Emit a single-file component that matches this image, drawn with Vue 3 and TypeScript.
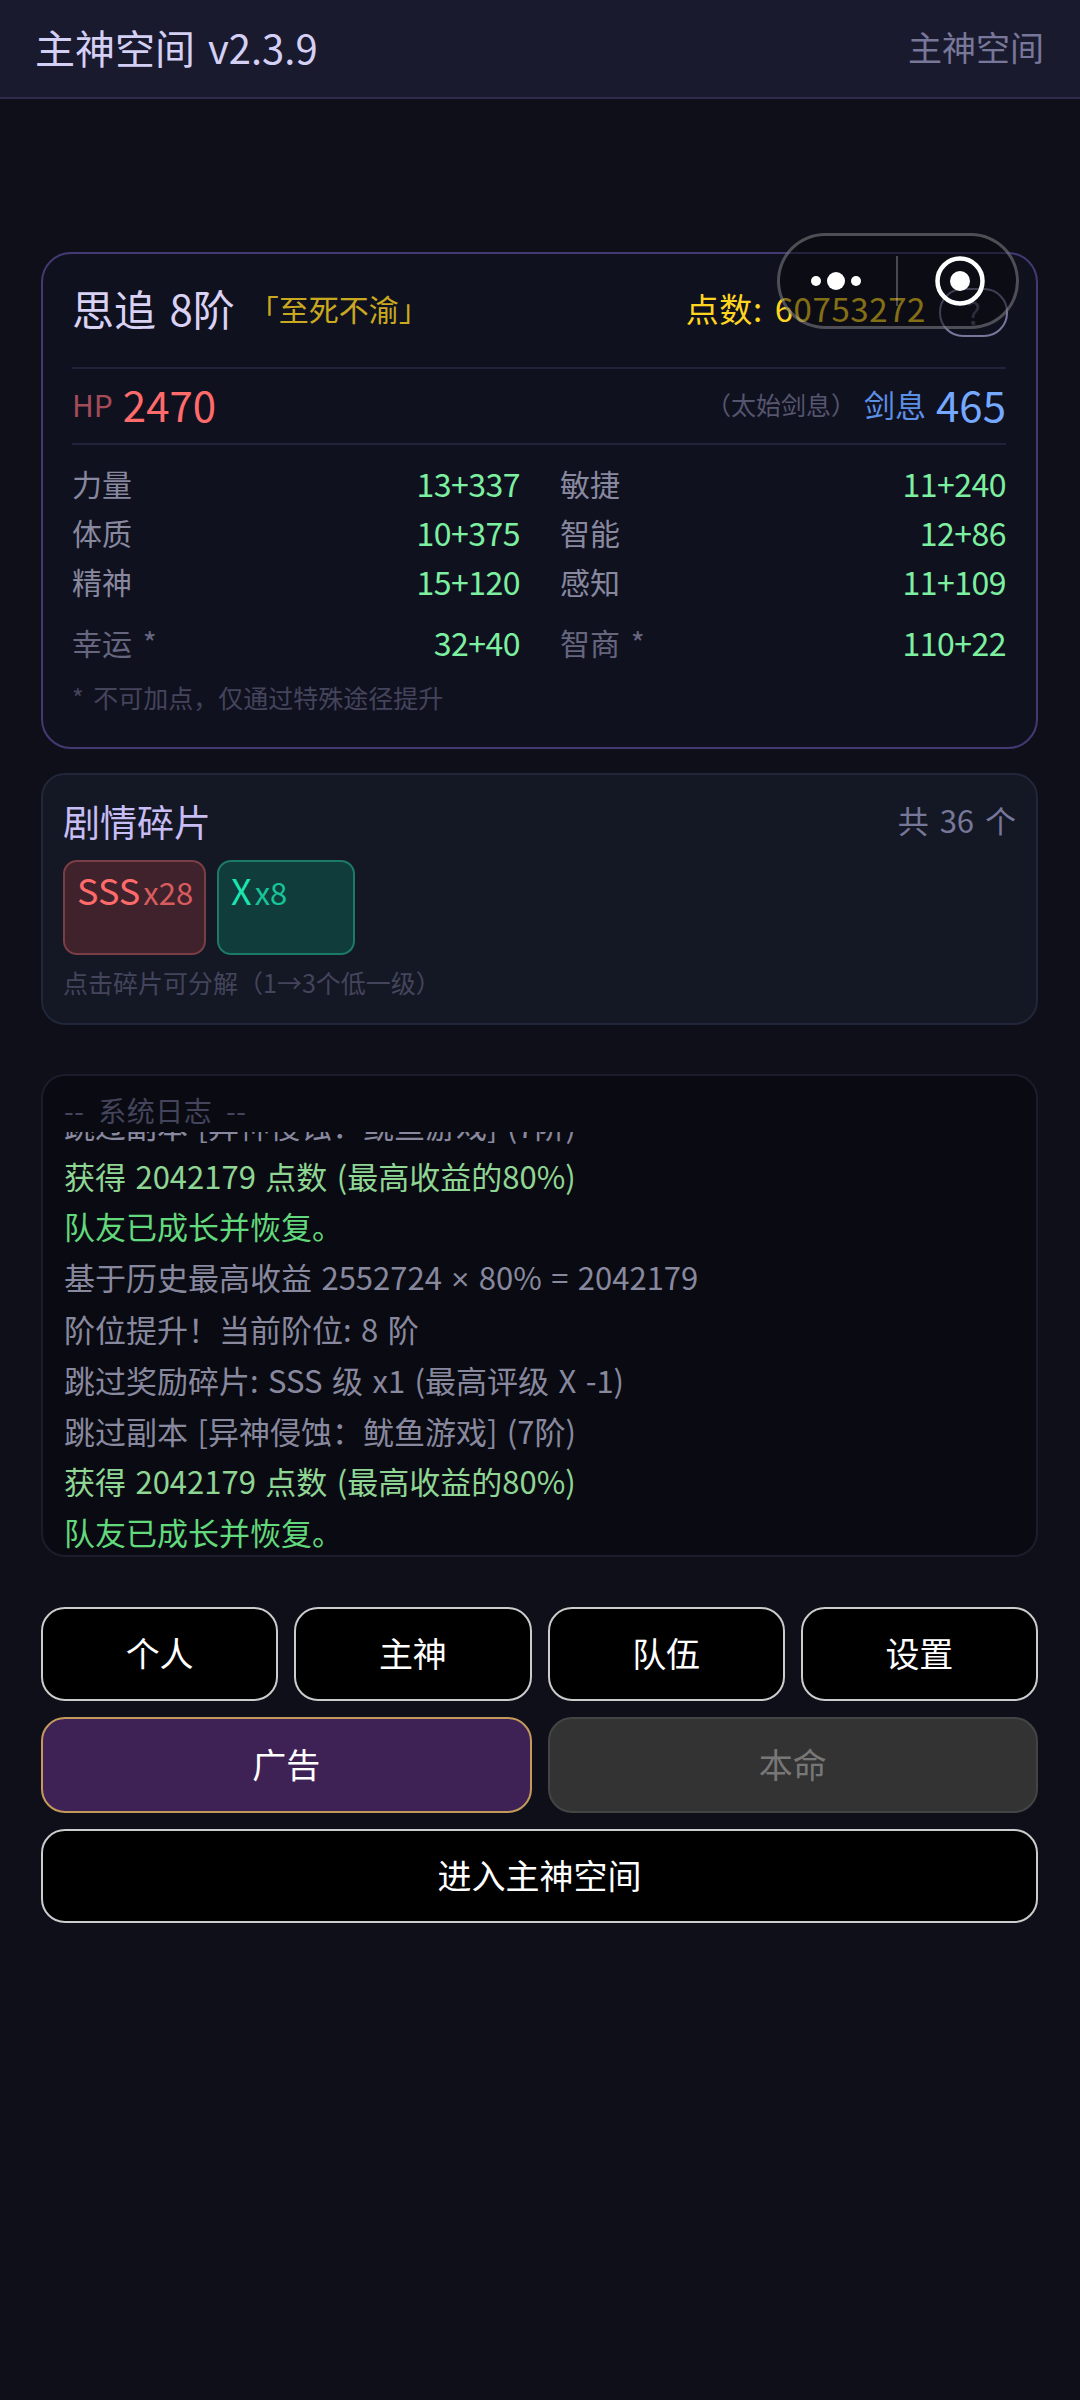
<template>
  <div class="page">
    <header class="topbar">
      <span class="app-title">主神空间 v2.3.9</span>
      <span class="app-sub">主神空间</span>
    </header>

    <main class="content">
      <section class="hero">
        <div class="hero-head">
          <span class="hero-name">思追 8阶</span>
          <span class="hero-title">「至死不渝」</span>
          <span class="points">点数: 60753272</span>
          <span class="help">?</span>
        </div>
        <div class="hero-hp">
          <span class="hp-label">HP</span>
          <span class="hp-value">2470</span>
          <span class="sword-note">（太始剑息）</span>
          <span class="sword-label">剑息</span>
          <span class="sword-value">465</span>
        </div>
        <div class="stats">
          <div v-for="s in stats" :key="s.name" class="stat">
            <span class="stat-name">{{ s.name }}</span>
            <span class="stat-value">{{ s.value }}</span>
          </div>
        </div>
        <div class="stats stats-special">
          <div v-for="s in specialStats" :key="s.name" class="stat">
            <span class="stat-name dim">{{ s.name }}</span>
            <span class="stat-value">{{ s.value }}</span>
          </div>
        </div>
        <p class="hero-note">* 不可加点，仅通过特殊途径提升</p>
      </section>

      <section class="shards">
        <div class="shards-head">
          <span class="shards-title">剧情碎片</span>
          <span class="shards-count">共 36 个</span>
        </div>
        <div class="chips">
          <div class="chip chip-sss"><span class="chip-grade">SSS</span><span class="chip-num">x28</span></div>
          <div class="chip chip-x"><span class="chip-grade">X</span><span class="chip-num">x8</span></div>
        </div>
        <p class="shards-note">点击碎片可分解（1→3个低一级）</p>
      </section>

      <section class="log">
        <div class="log-title">-- 系统日志 --</div>
        <div class="log-body">
          <div v-for="(l, i) in logs" :key="i" class="log-line" :class="l.kind">
            <template v-for="(part, j) in l.text.split('×')" :key="j">
              <span v-if="j" class="times">×</span>{{ part }}
            </template>
          </div>
        </div>
      </section>

      <nav class="actions">
        <div class="row four">
          <button v-for="b in mainButtons" :key="b" class="btn">{{ b }}</button>
        </div>
        <div class="row two">
          <button class="btn btn-ad">广告</button>
          <button class="btn btn-off">本命</button>
        </div>
        <button class="btn">进入主神空间</button>
      </nav>
    </main>

    <div class="capsule">
      <div class="capsule-part">
        <svg width="60" height="24" viewBox="0 0 60 24">
          <circle cx="10" cy="12" r="5" fill="#fff" />
          <circle cx="30" cy="12" r="9" fill="#fff" />
          <circle cx="50" cy="12" r="5" fill="#fff" />
        </svg>
      </div>
      <div class="capsule-part">
        <svg width="52" height="52" viewBox="0 0 52 52">
          <circle cx="26" cy="26" r="22.5" fill="none" stroke="#fff" stroke-width="4.5" />
          <circle cx="26" cy="26" r="10" fill="#fff" />
        </svg>
      </div>
    </div>
  </div>
</template>

<script setup lang="ts">
const stats = [
  { name: '力量', value: '13+337' },
  { name: '敏捷', value: '11+240' },
  { name: '体质', value: '10+375' },
  { name: '智能', value: '12+86' },
  { name: '精神', value: '15+120' },
  { name: '感知', value: '11+109' },
]

const specialStats = [
  { name: '幸运 *', value: '32+40' },
  { name: '智商 *', value: '110+22' },
]

const logs = [
  { text: '跳过副本 [异神侵蚀：鱿鱼游戏] (7阶)', kind: '' },
  { text: '获得 2042179 点数 (最高收益的80%)', kind: 'gain' },
  { text: '队友已成长并恢复。', kind: 'ok' },
  { text: '基于历史最高收益 2552724 × 80% = 2042179', kind: '' },
  { text: '阶位提升！当前阶位: 8 阶', kind: '' },
  { text: '跳过奖励碎片: SSS 级 x1 (最高评级 X -1)', kind: '' },
  { text: '跳过副本 [异神侵蚀：鱿鱼游戏] (7阶)', kind: '' },
  { text: '获得 2042179 点数 (最高收益的80%)', kind: 'gain' },
  { text: '队友已成长并恢复。', kind: 'ok' },
]

const mainButtons = ['个人', '主神', '队伍', '设置']
</script>

<style>
html, body { background: #0f0f1a; }
</style>

<style scoped>
.page {
  position: relative;
  min-height: 2400px;
  background: #0f0f1a;
  font-family: "Noto Sans CJK SC", sans-serif;
  word-spacing: 4px;
  color: #ccc;
}
.topbar {
  height: 99px;
  box-sizing: border-box;
  padding: 0 36px 4px 35px;
  display: flex; align-items: center; justify-content: space-between;
  background: #1a1a2e;
  border-bottom: 2px solid #2d2d4a;
}
.app-title { font-size: 40px; color: #d4d0f5; }
.app-sub { font-size: 34px; color: #77779a; }

.content { padding: 153px 42px 0 41px; }

.hero {
  box-sizing: border-box;
  height: 497px;
  padding: 0 30px 0 29px;
  background: #10111f;
  border: 2px solid #433a74;
  border-radius: 30px;
}
.hero-head {
  box-sizing: border-box;
  height: 115px;
  padding-bottom: 6px;
  display: flex; align-items: center;
  border-bottom: 2px solid #22223a;
}
.hero-name { font-size: 42px; color: #d9d2f5; }
.hero-title { font-size: 30px; color: #c9a920; margin-left: 14px; }
.points { margin-left: auto; font-size: 33px; letter-spacing: .6px; color: #ffd61f; }
.help {
  width: 69px; height: 49px;
  box-sizing: border-box;
  margin: 9px -2px 0 13px;
  border: 2px solid #77779a;
  border-radius: 24px;
  display: flex; align-items: center; justify-content: center;
  font-size: 30px;
  color: #55556f;
}
.hero-hp {
  box-sizing: border-box;
  height: 76px;
  padding-bottom: 5px;
  display: flex; align-items: center;
  border-bottom: 2px solid #22223a;
}
.hp-label { font-size: 30px; color: #a34b57; }
.hp-value { font-size: 42px; color: #ff6b6b; margin-left: 10px; }
.sword-note { margin-left: auto; font-size: 25px; color: #55556f; }
.sword-label { font-size: 31px; color: #5c8fe6; margin-left: 8px; }
.sword-value { font-size: 42px; color: #74a9ff; margin-left: 10px; }

.stats {
  display: grid;
  grid-template-columns: 448px 1fr;
  column-gap: 40px;
  padding-top: 13px;
}
.stats-special { padding-top: 12px; }
.stat {
  height: 49px;
  display: flex; align-items: center; justify-content: space-between;
}
.stat-name { font-size: 30px; color: #88889f; }
.stat-name.dim { color: #66667f; }
.stat-value { font-size: 32px; letter-spacing: -0.5px; color: #7cf0a0; }
.hero-note { margin: 13px 0 0; font-size: 25px; color: #44445c; }

.shards {
  box-sizing: border-box;
  height: 252px;
  margin-top: 24px;
  padding: 16px 20px 0;
  background: #141824;
  border: 2px solid #22263a;
  border-radius: 24px;
}
.shards-head { display: flex; align-items: center; justify-content: space-between; height: 60px; }
.shards-title { font-size: 37px; color: #c8bdf5; }
.shards-count { font-size: 31px; color: #77779a; position: relative; top: -2px; }
.chips { display: flex; gap: 11px; margin-top: 9px; }
.chip {
  box-sizing: border-box;
  height: 95px;
  padding: 1px 12px;
  border: 2px solid;
  border-radius: 14px;
  display: flex; align-items: baseline; gap: 3px;
}
.chip-sss { width: 143px; background: #40222c; border-color: #7a3e46; color: #ff6b6b; }
.chip-x { width: 138px; background: #103c3c; border-color: #1c7a68; color: #19e6b0; }
.chip-grade { font-size: 36px; }
.chip-num { font-size: 31px; opacity: .8; }
.shards-note { margin: 9px 0 0; font-size: 25px; color: #44445c; }

.log {
  box-sizing: border-box;
  height: 483px;
  margin-top: 49px;
  padding: 16px 21px 0;
  background: #0a0b12;
  border: 2px solid #1c1d2c;
  border-radius: 24px;
  display: flex; flex-direction: column;
  overflow: hidden;
}
.log-title { flex: none; font-size: 28px; line-height: 36px; word-spacing: 7px; letter-spacing: .5px; color: #44445c; margin-bottom: 4px; }
.log-body {
  flex: 1;
  min-height: 0;
  overflow: hidden;
  display: flex; flex-direction: column; justify-content: flex-end;
  margin-bottom: -3px;
}
.log-line { flex: none; font-size: 31px; line-height: 50.8px; white-space: nowrap; word-spacing: 2.5px; color: #88889f; }
.log-line.gain { color: #8fd694; }
.log-line.ok { color: #62d97c; }
.times { font-family: Lato, sans-serif; }

.actions { margin-top: 50px; display: flex; flex-direction: column; gap: 16px; }
.row { display: grid; gap: 16px; }
.four { grid-template-columns: repeat(4, 1fr); }
.two { grid-template-columns: repeat(2, 1fr); }
.btn {
  box-sizing: border-box;
  height: 94px;
  padding: 0 0 4px;
  background: #000;
  border: 2px solid #ccc;
  border-radius: 24px;
  color: #fff;
  font-family: inherit;
  font-size: 34px;
}
.two .btn { height: 96px; }
.btn-ad { background: #3f2255; border-color: #c49a5c; }
.btn-off { background: #333; border-color: #444; color: #777; }

.capsule {
  position: absolute;
  left: 777px; top: 233px;
  box-sizing: border-box;
  width: 242px; height: 96px;
  display: flex; align-items: center;
  background: rgba(8, 8, 12, .5);
  border: 3px solid rgba(255, 255, 255, .28);
  border-radius: 48px;
}
.capsule-part {
  box-sizing: border-box;
  flex: 1; height: 50px;
  display: flex; align-items: center; justify-content: center;
}
.capsule-part:first-child { padding-right: 4px; border-right: 2px solid rgba(255, 255, 255, .25); }
.capsule-part:last-child { padding-left: 6px; }
</style>
